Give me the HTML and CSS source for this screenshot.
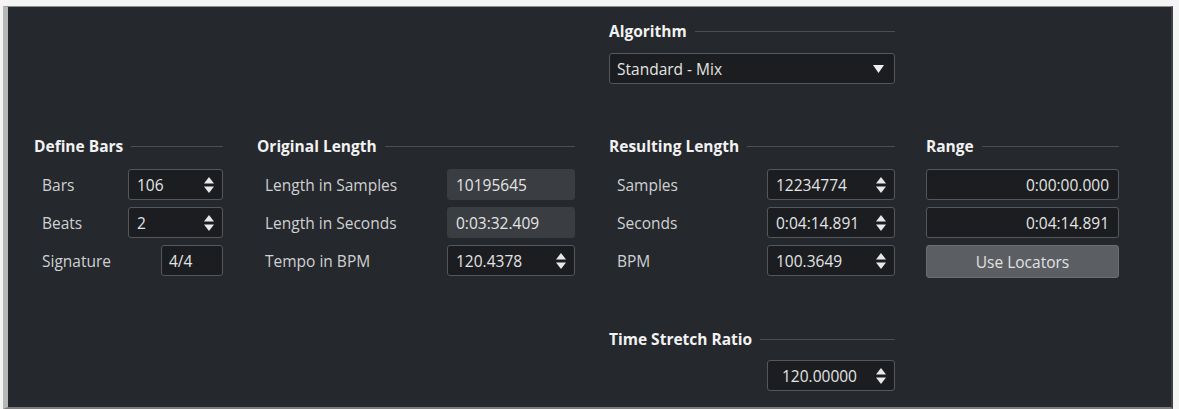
FILE: index.html
```html
<!DOCTYPE html>
<html lang="en">
<head>
<meta charset="UTF-8" />
<title>Time Stretch</title>
<link rel="stylesheet" href="styles.css">
</head>
<body>

<div class="frame">
  <div class="grid">

    <!-- Algorithm -->
    <div class="section algo">
      <div class="sec-head"><span>Algorithm</span></div>
      <div class="dropdown">
        <span>Standard - Mix</span>
        <svg width="11" height="8" viewBox="0 0 11 8"><polygon points="0,0 11,0 5.5,8" fill="#eeeeee"/></svg>
      </div>
    </div>

    <!-- Define Bars -->
    <div class="section bars">
      <div class="sec-head"><span>Define Bars</span></div>
      <div class="rows">
        <div class="row">
          <span class="label">Bars</span>
          <div class="field spin w95"><span>106</span>
            <svg class="spinner" width="10" height="16" viewBox="0 0 10 16"><polygon points="0,6.5 5,0 10,6.5"/><polygon points="0,9.5 10,9.5 5,16"/></svg>
          </div>
        </div>
        <div class="row">
          <span class="label">Beats</span>
          <div class="field spin w95"><span>2</span>
            <svg class="spinner" width="10" height="16" viewBox="0 0 10 16"><polygon points="0,6.5 5,0 10,6.5"/><polygon points="0,9.5 10,9.5 5,16"/></svg>
          </div>
        </div>
        <div class="row">
          <span class="label">Signature</span>
          <div class="field w62"><span>4/4</span></div>
        </div>
      </div>
    </div>

    <!-- Original Length -->
    <div class="section original">
      <div class="sec-head"><span>Original Length</span></div>
      <div class="rows">
        <div class="row">
          <span class="label">Length in Samples</span>
          <div class="field readonly w128"><span>10195645</span></div>
        </div>
        <div class="row">
          <span class="label">Length in Seconds</span>
          <div class="field readonly w128"><span>0:03:32.409</span></div>
        </div>
        <div class="row">
          <span class="label">Tempo in BPM</span>
          <div class="field spin w128"><span>120.4378</span>
            <svg class="spinner" width="10" height="16" viewBox="0 0 10 16"><polygon points="0,6.5 5,0 10,6.5"/><polygon points="0,9.5 10,9.5 5,16"/></svg>
          </div>
        </div>
      </div>
    </div>

    <!-- Resulting Length -->
    <div class="section resulting">
      <div class="sec-head"><span>Resulting Length</span></div>
      <div class="rows">
        <div class="row">
          <span class="label">Samples</span>
          <div class="field spin w128"><span>12234774</span>
            <svg class="spinner" width="10" height="16" viewBox="0 0 10 16"><polygon points="0,6.5 5,0 10,6.5"/><polygon points="0,9.5 10,9.5 5,16"/></svg>
          </div>
        </div>
        <div class="row">
          <span class="label">Seconds</span>
          <div class="field spin w128"><span>0:04:14.891</span>
            <svg class="spinner" width="10" height="16" viewBox="0 0 10 16"><polygon points="0,6.5 5,0 10,6.5"/><polygon points="0,9.5 10,9.5 5,16"/></svg>
          </div>
        </div>
        <div class="row">
          <span class="label">BPM</span>
          <div class="field spin w128"><span>100.3649</span>
            <svg class="spinner" width="10" height="16" viewBox="0 0 10 16"><polygon points="0,6.5 5,0 10,6.5"/><polygon points="0,9.5 10,9.5 5,16"/></svg>
          </div>
        </div>
      </div>
    </div>

    <!-- Range -->
    <div class="section range">
      <div class="sec-head"><span>Range</span></div>
      <div class="rows">
        <div class="field right"><span>0:00:00.000</span></div>
        <div class="field right"><span>0:04:14.891</span></div>
        <button class="btn">Use Locators</button>
      </div>
    </div>

    <!-- Time Stretch Ratio -->
    <div class="section stretch">
      <div class="sec-head"><span>Time Stretch Ratio</span></div>
      <div class="row end">
        <div class="field spin w128 ratio"><span>120.00000</span>
          <svg class="spinner" width="10" height="16" viewBox="0 0 10 16"><polygon points="0,6.5 5,0 10,6.5"/><polygon points="0,9.5 10,9.5 5,16"/></svg>
        </div>
      </div>
    </div>

  </div>
</div>

</body>
</html>
```

FILE: styles.css
```css
body {
  margin: 0;
  background: #f4f4f4;
  font-family: 'Open Sans', 'Noto Sans', sans-serif;
  font-size: 15.5px;
  color: #d0d1d2;
}
.frame {
  margin: 6px 6px 0 3px;
  height: 386px;
  background: #25282c;
  border-left: 5px solid #b7b7b7;
  border-top: 1px solid #8c8c8c;
  border-right: 2px solid #3c3f43;
  border-bottom: 2px solid #7c7c7c;
  padding: 14px 0 0 26px;
  box-sizing: content-box;
}
.grid {
  display: grid;
  grid-template-columns: 223px 352px 318px 193px;
}
.section {
  display: flex;
  flex-direction: column;
}
.algo { grid-column: 3; grid-row: 1; width: 286px; margin-bottom: 52px; }
.bars { grid-column: 1; grid-row: 2; width: 189px; }
.original { grid-column: 2; grid-row: 2; width: 318px; }
.resulting { grid-column: 3; grid-row: 2; width: 286px; }
.range { grid-column: 4; grid-row: 2; width: 193px; margin-left: -1px; }
.stretch { grid-column: 3; grid-row: 3; width: 286px; margin-top: 51px; }

.sec-head {
  display: flex;
  align-items: center;
  gap: 8px;
  height: 20px;
  font-weight: bold;
  color: #f2f2f2;
}
.sec-head::after {
  content: '';
  flex: 1;
  height: 1px;
  background: #4b4e53;
}
.rows {
  display: flex;
  flex-direction: column;
  gap: 7px;
  margin-top: 13px;
}
.row {
  display: flex;
  align-items: center;
  justify-content: space-between;
  height: 31px;
}
.row.end {
  justify-content: flex-end;
  margin-top: 11px;
}
.label {
  padding-left: 8px;
}

.field {
  display: flex;
  align-items: center;
  height: 31px;
  box-sizing: border-box;
  background: #1b1d20;
  border: 1px solid #54575c;
  border-radius: 3px;
  padding: 0 8px;
  color: #e4e4e4;
}
.field.spin { justify-content: space-between; }
.field.readonly {
  background: #3a3d41;
  border-color: #3a3d41;
}
.field.right { justify-content: flex-end; padding-right: 9px; }
.field.ratio { padding-left: 14px; }
.w95 { width: 95px; }
.w62 { width: 62px; padding-left: 7px; }
.w128 { width: 128px; }
.spinner { fill: #e8e8e8; flex-shrink: 0; }

.dropdown {
  display: flex;
  align-items: center;
  justify-content: space-between;
  margin-top: 12px;
  height: 31px;
  box-sizing: border-box;
  background: #1b1d20;
  border: 1px solid #54575c;
  border-radius: 3px;
  padding: 0 10px 0 7px;
  color: #e4e4e4;
}

.btn {
  height: 33px;
  background: #5b5e62;
  border: 1px solid #6b6e72;
  border-radius: 3px;
  color: #e2e2e2;
  font-family: inherit;
  font-size: 15.5px;
  padding: 0;
}
```
